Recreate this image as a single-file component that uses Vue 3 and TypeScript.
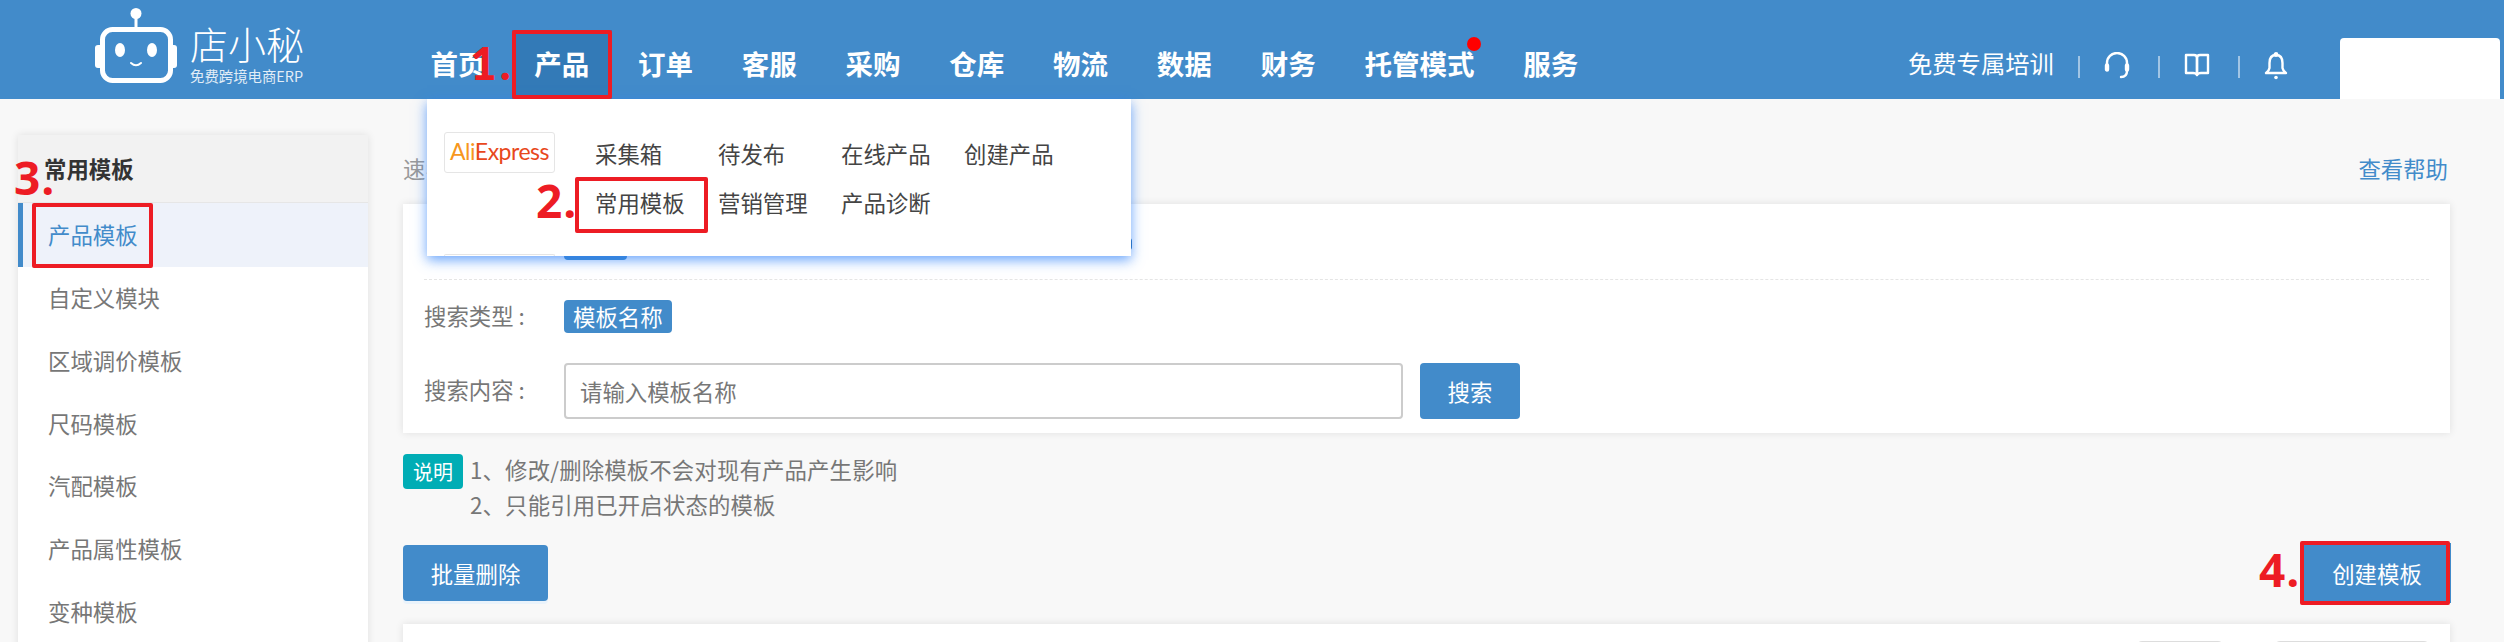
<script setup lang="ts">
const nav: string[] = ['首页', '产品', '订单', '客服', '采购', '仓库', '物流', '数据', '财务', '托管模式', '服务']
const sideItems: string[] = ['产品模板', '自定义模块', '区域调价模板', '尺码模板', '汽配模板', '产品属性模板', '变种模板']
const menuRows: string[][] = [
  ['采集箱', '待发布', '在线产品', '创建产品'],
  ['常用模板', '营销管理', '产品诊断'],
]
</script>

<template>
  <div class="page">
    <header class="top">
      <div class="logo">
        <svg class="robot" width="82" height="76" viewBox="0 0 82 76" fill="none">
          <circle cx="41" cy="5.500" r="5.500" fill="#fff" />
          <rect x="39.500" y="9" width="3" height="12" fill="#fff" />
          <rect x="7.500" y="21.500" width="68" height="51" rx="10" stroke="#fff" stroke-width="5" />
          <path d="M5 37 H3 Q0 37 0 40 V57 Q0 60 3 60 H5 Z" fill="#fff" />
          <path d="M78 37 H79 Q82 37 82 40 V57 Q82 60 79 60 H78 Z" fill="#fff" />
          <ellipse cx="25" cy="42" rx="5" ry="7" fill="#fff" />
          <ellipse cx="57" cy="42" rx="5" ry="7" fill="#fff" />
          <path d="M36 55 q5 4.500 10 0" stroke="#fff" stroke-width="2" stroke-linecap="round" />
        </svg>
        <div class="brand">
          <div class="brand-name">店小秘</div>
          <div class="brand-sub">免费跨境电商ERP</div>
        </div>
      </div>
      <nav class="nav">
        <span v-for="(n, i) in nav" :key="n" class="nav-item" :class="{ on: i === 1 }">
          {{ n }}<i v-if="n === '托管模式'" class="dot"></i>
        </span>
      </nav>
      <div class="tools">
        <span class="train">免费专属培训</span>
        <i class="sep"></i>
        <svg width="26" height="28" viewBox="0 0 26 28" fill="none" stroke="#fff" stroke-width="2.400" stroke-linecap="round">
          <path d="M3 15 V11 a10 10 0 0 1 20 0 V15" />
          <rect x="1.500" y="12" width="3" height="7" rx="1.500" fill="#fff" stroke-width="1.400" />
          <rect x="21.500" y="12" width="3" height="7" rx="1.500" fill="#fff" stroke-width="1.400" />
          <path d="M23 19 q0 6 -6 6" />
        </svg>
        <i class="sep"></i>
        <svg width="26" height="26" viewBox="0 0 26 26" fill="none" stroke="#fff" stroke-width="2.400" stroke-linejoin="round">
          <path d="M2 3 H10 Q13 3 13 6 V23 Q12 21 9 21 H2 Z" />
          <path d="M24 3 H16 Q13 3 13 6 V23 Q14 21 17 21 H24 Z" />
        </svg>
        <i class="sep"></i>
        <svg width="24" height="28" viewBox="0 0 24 28" fill="none" stroke="#fff" stroke-width="2.400" stroke-linejoin="round">
          <path d="M12 3 C7 3 5.500 7 5.500 11 V16 Q5 19 2 21 H22 Q19 19 18.500 16 V11 C18.500 7 17 3 12 3 Z" />
          <circle cx="12" cy="2.500" r="1.200" fill="#fff" />
          <circle cx="12" cy="25.500" r="1.800" fill="#fff" stroke="none" />
        </svg>
        <div class="user"></div>
      </div>
    </header>

    <div class="body">
      <aside class="side">
        <div class="side-head">常用模板</div>
        <div v-for="(s, i) in sideItems" :key="s" class="side-item" :class="{ on: i === 0 }">{{ s }}</div>
      </aside>

      <main class="main">
        <div class="tabline">
          <span class="tab-text">速卖通</span>
          <a class="help">查看帮助</a>
        </div>
        <section class="card filter">
          <div class="row first">
            <span class="tab-tag"></span>
            <span class="end-tag"></span>
          </div>
          <div class="row type">
            <span class="label">搜索类型 :</span>
            <span class="tag">模板名称</span>
          </div>
          <div class="row content">
            <span class="label">搜索内容 :</span>
            <div class="input">请输入模板名称</div>
            <button class="btn search">搜索</button>
          </div>
        </section>
        <div class="note">
          <span class="note-tag">说明</span>
          <div class="note-text">
            <div>1、修改/删除模板不会对现有产品产生影响</div>
            <div>2、只能引用已开启状态的模板</div>
          </div>
        </div>
        <div class="actions">
          <button class="btn batch">批量删除</button>
          <button class="btn create">创建模板</button>
        </div>
        <section class="card table">
          <span class="pick a"></span>
          <span class="pick b"></span>
        </section>
      </main>
    </div>

    <div class="menu">
      <div class="ali"><span class="ali-a">Ali</span><span class="ali-e">Express</span></div>
      <div class="menu-grid">
        <div v-for="(r, i) in menuRows" :key="i" class="menu-row">
          <span v-for="m in r" :key="m" class="menu-item">{{ m }}</span>
        </div>
      </div>
      <i class="ali-next"></i>
    </div>

    <i class="box b1"></i>
    <i class="box b2"></i>
    <i class="box b3"></i>
    <i class="box b4"></i>
    <span class="num n1">1.</span>
    <span class="num n2">2.</span>
    <span class="num n3">3.</span>
    <span class="num n4">4.</span>
  </div>
</template>

<style>
html, body { margin: 0; padding: 0; background: #f8f8f8; }
</style>

<style scoped>
.page {
  position: relative;
  width: 2504px;
  height: 642px;
  overflow: hidden;
  background: #f8f8f8;
  font-family: "Noto Sans CJK SC", "Liberation Sans", sans-serif;
  font-size: 22.4px;
  color: #777;
}
.top {
  height: 99px;
  background: #428bca;
  display: flex;
  align-items: flex-start;
  color: #fff;
}
.logo {
  width: 406px;
  padding: 8px 0 0 95px;
  box-sizing: border-box;
  display: flex;
  flex: none;
  gap: 13px;
}
.brand { padding-top: 13px; width: 116px; }
.brand-name {
  font-size: 38px;
  line-height: 44px;
  font-weight: 300;
  white-space: nowrap;
}
.brand-sub {
  font-size: 14.4px;
  line-height: 18px;
  margin-top: 2px;
  opacity: 0.85;
  white-space: nowrap;
}
.nav {
  display: flex;
  margin-top: 30px;
  height: 69px;
}
.nav-item {
  position: relative;
  padding: 0 24.4px;
  font-size: 27.5px;
  font-weight: 700;
  line-height: 66px;
  white-space: nowrap;
}
.nav-item.on {
  background: linear-gradient(#337ab7, #337ab7) center / 100px 100% no-repeat;
}
.dot {
  position: absolute;
  top: 7px;
  right: 18px;
  width: 14px;
  height: 14px;
  border-radius: 50%;
  background: #f00;
}
.tools {
  position: absolute;
  top: 0;
  left: 1908px;
  height: 99px;
  display: flex;
  align-items: flex-start;
}
.train { font-size: 24.3px; line-height: 36px; margin-top: 45px; width: 170px; white-space: nowrap; }
.sep { width: 2px; height: 22px; margin-top: 56px; background: rgba(255, 255, 255, 0.5); flex: none; }
.tools svg { margin: 52px 0 0 24px; flex: none; }
.tools svg + .sep { margin-left: 28px; }
.user {
  margin: 38px 0 0 52px;
  width: 160px;
  height: 61px;
  background: #fff;
  border-radius: 4px 4px 0 0;
  flex: none;
}
.body {
  display: flex;
  padding: 36px 54px 0 18px;
  gap: 35px;
}
.side {
  width: 350px;
  flex: none;
  height: 560px;
  background: #fff;
  box-shadow: 0 0 8px rgba(0, 0, 0, 0.1);
}
.side-head {
  height: 68px;
  background: #f2f2f2;
  border-bottom: 1px solid #e6e6e6;
  box-sizing: border-box;
  padding-left: 26px;
  font-weight: 700;
  color: #333;
  line-height: 66px;
}
.side-item {
  height: 62.8px;
  line-height: 61px;
  padding-left: 30px;
  box-sizing: border-box;
}
.side-item.on {
  height: 64px;
  line-height: 62px;
  background: #eef2fa;
  color: #428bca;
  box-shadow: inset 5px 0 0 #428bca;
}
.main { flex: 1; min-width: 0; margin-top: -36px; }
.tabline {
  height: 105px;
  display: flex;
  justify-content: space-between;
  align-items: flex-start;
  padding: 51px 2px 0 0;
  box-sizing: border-box;
  line-height: 36px;
}
.tab-text { color: #999; }
.help { color: #428bca; }
.card {
  background: #fff;
  box-shadow: 0 0 8px rgba(0, 0, 0, 0.1);
}
.filter {
  height: 229px;
  padding: 0 21px;
  box-sizing: border-box;
}
.row { display: flex; align-items: center; }
.row.first {
  height: 75px;
  border-bottom: 1px dashed #e5e5e5;
  align-items: flex-start;
}
.label { width: 140px; flex: none; white-space: nowrap; margin-top: -4px; }
.tag {
  background: #428bca;
  color: #fff;
  border-radius: 4px;
  padding: 0 9px;
  height: 33px;
  line-height: 33px;
  white-space: nowrap;
}
.tab-tag {
  width: 63px;
  height: 36px;
  margin: 20px 0 0 140px;
  background: #428bca;
  border-radius: 4px;
  flex: none;
}
.end-tag {
  width: 20px;
  height: 12px;
  margin: 34px 0 0 485px;
  background: #2a6fb0;
  border-radius: 3px;
  flex: none;
}
.row.type { margin-top: 20px; }
.row.content { margin-top: 30px; }
.input {
  width: 839px;
  height: 56px;
  box-sizing: border-box;
  border: 2px solid #ccc;
  border-radius: 4px;
  background: #fff;
  line-height: 52px;
  padding-left: 14px;
}
.btn {
  border: none;
  border-radius: 4px;
  background: #428bca;
  color: #fff;
  font: inherit;
  padding: 0;
}
.search { width: 100px; height: 56px; margin-left: 17px; }
.note {
  display: flex;
  margin-top: 21px;
  gap: 7px;
}
.note-tag {
  width: 60px;
  height: 35px;
  line-height: 35px;
  background: #00adb5;
  border-radius: 4px;
  color: #fff;
  text-align: center;
  font-size: 20px;
  flex: none;
}
.note-text { line-height: 35px; letter-spacing: 0.15px; margin-top: -2px; height: 35px; }
.actions {
  display: flex;
  justify-content: space-between;
  align-items: flex-start;
  margin-top: 56px;
}
.batch {
  width: 145px;
  height: 56px;
  box-shadow: 0 3px 0 #eaf3fb;
}
.create {
  width: 148px;
  height: 60px;
  margin-right: -1px;
  margin-top: -2px;
  border-radius: 0;
}
.table {
  margin-top: 21px;
  height: 80px;
  position: relative;
}
.pick {
  position: absolute;
  top: 17px;
  height: 40px;
  border: 1px solid #ddd;
  border-radius: 6px;
  box-sizing: border-box;
}
.pick.a { left: 1733px; width: 88px; }
.pick.b { left: 1871px; width: 156px; }
.menu {
  position: absolute;
  left: 427px;
  top: 99px;
  width: 704px;
  height: 157px;
  background: #fff;
  box-shadow: 0 4px 12px rgba(40, 125, 250, 0.7);
  display: flex;
  align-items: flex-start;
  padding: 33px 0 0 17px;
  box-sizing: border-box;
  color: #444;
}
.ali {
  width: 111px;
  height: 41px;
  box-sizing: border-box;
  border: 1px solid #e5e5e5;
  border-radius: 3px;
  font-family: Lato, "Liberation Sans", sans-serif;
  font-size: 23px;
  letter-spacing: -0.5px;
  line-height: 37px;
  text-align: center;
  flex: none;
}
.ali-a { color: #f7971d; }
.ali-e { color: #e8481c; }
.ali-next {
  position: absolute;
  left: 17px;
  bottom: 0;
  width: 111px;
  height: 2px;
  border: 1px solid #e5e5e5;
  border-bottom: none;
  border-radius: 3px 3px 0 0;
  box-sizing: border-box;
}
.menu-grid { padding: 0 0 0 40px; margin-top: -4px; }
.menu-row { display: flex; height: 49.5px; align-items: center; }
.menu-item { width: 123px; flex: none; white-space: nowrap; font-size: 22.4px; }
.box {
  position: absolute;
  box-sizing: border-box;
  border: 4px solid #ed1c24;
  border-radius: 2px;
}
.b1 { left: 512px; top: 30px; width: 100px; height: 69px; }
.b2 { left: 575px; top: 177px; width: 133px; height: 56px; }
.b3 { left: 32px; top: 203px; width: 121px; height: 65px; }
.b4 { left: 2300px; top: 541px; width: 150px; height: 64px; }
.num {
  position: absolute;
  color: #ed1c24;
  font-family: "Open Sans", "Liberation Sans", sans-serif;
  font-weight: 700;
  font-size: 46px;
  line-height: 46px;
  letter-spacing: 1px;
  white-space: nowrap;
}
.n1 { left: 470px; top: 40px; font-family: Lato, sans-serif; font-weight: 900; letter-spacing: 3px; }
.n2 { left: 536px; top: 177px; }
.n3 { left: 14px; top: 154px; }
.n4 { left: 2259px; top: 546px; }
</style>
